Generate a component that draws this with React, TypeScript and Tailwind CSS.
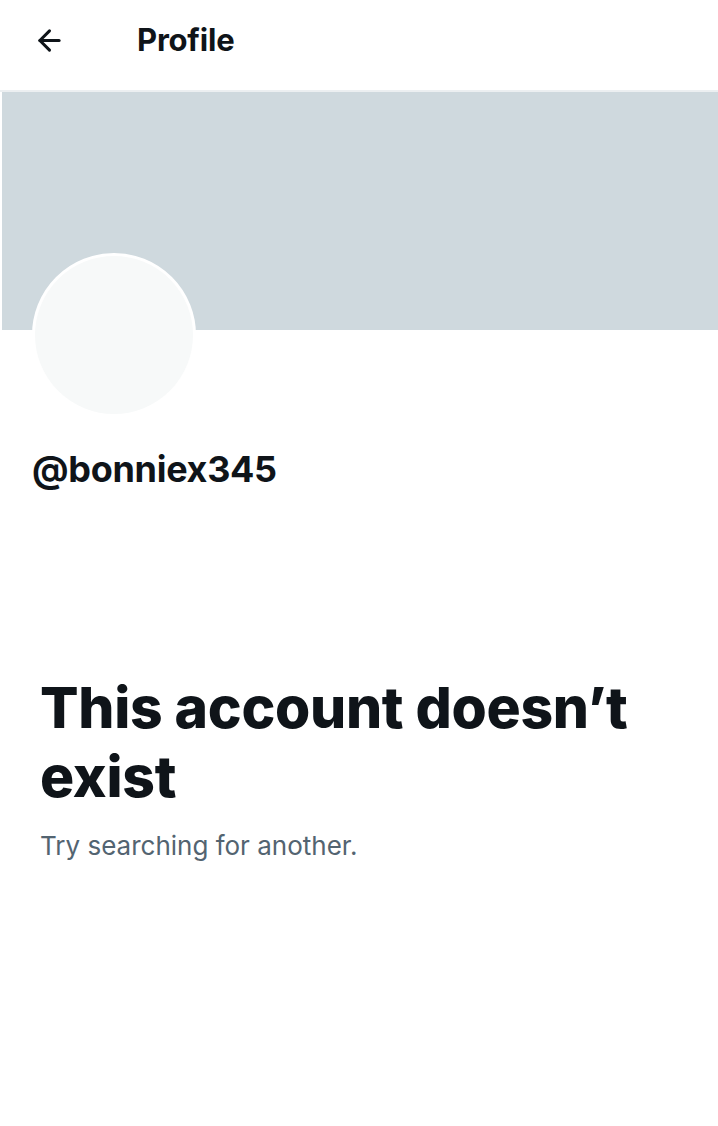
import { ArrowLeft } from 'lucide-react';

export default function App() {
  return (
    <div className="min-h-[1126px] w-[718px] bg-white text-[#0f1419] font-['Inter',sans-serif]">
      <header className="flex h-[90px] items-center pb-[10px]">
        <div className="flex w-[137px] pl-[33px]">
          <ArrowLeft className="h-[33px] w-[33px]" strokeWidth={2.2} />
        </div>
        <h1 className="text-[31px] font-bold tracking-[-0.2px]">Profile</h1>
      </header>
      <div className="h-[2px] bg-[#eceff1]" />
      <div className="ml-[2px] h-[238px] bg-[#cfd9de]" />
      <div className="px-[32px]">
        <div className="-mt-[77px] h-[164px] w-[164px] rounded-full border-[3px] border-white bg-[#f7f9f9]" />
        <div className="mt-[30px] text-[36px] font-bold leading-[44px] tracking-[-0.3px]">@bonniex345</div>
        <div className="mt-[182px] pl-[8px]">
          <h2 className="text-[57px] font-extrabold leading-[69px] tracking-[-0.3px]">
            This account doesn’t exist
          </h2>
          <p className="mt-[19px] text-[26px] leading-[32px] text-[#536471]">Try searching for another.</p>
        </div>
      </div>
    </div>
  );
}
